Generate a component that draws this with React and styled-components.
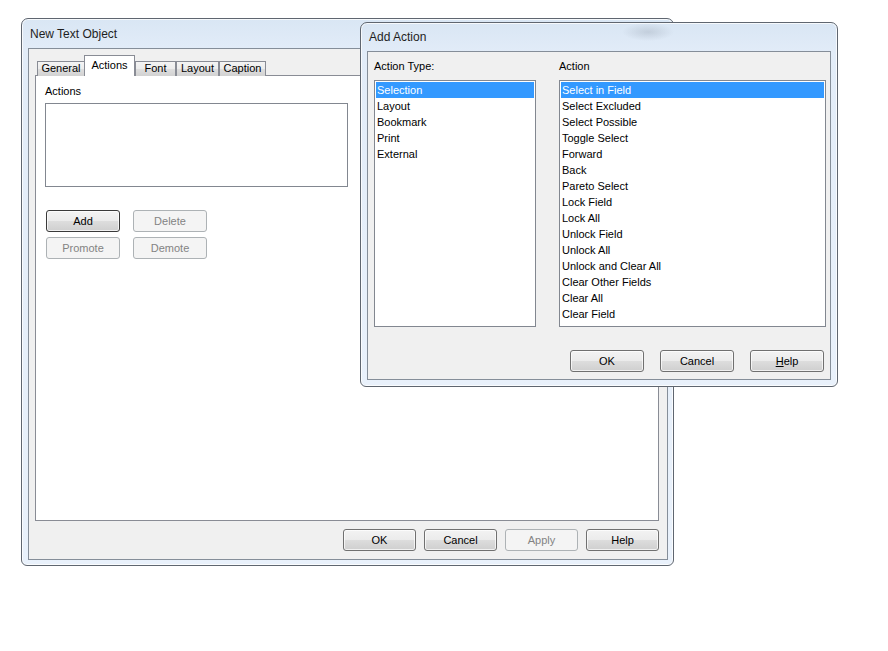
import React from "react";
import styled, { createGlobalStyle, css } from "styled-components";

const Global = createGlobalStyle`
  html, body { margin: 0; padding: 0; background: #ffffff; }
  body { font-family: "Liberation Sans", Arial, sans-serif; font-size: 11px; color: #000; }
  * { box-sizing: border-box; }
`;

const Desktop = styled.div`
  position: relative;
  width: 888px;
  height: 651px;
  overflow: hidden;
  background: #ffffff;
`;

const Frame = styled.div`
  position: absolute;
  left: ${(p) => p.$x}px;
  top: ${(p) => p.$y}px;
  width: ${(p) => p.$w}px;
  height: ${(p) => p.$h}px;
  display: flex;
  flex-direction: column;
  padding: 0 ${(p) => p.$pad}px ${(p) => p.$pad}px 6px;
  border: 1px solid #5f6670;
  border-radius: 7px 7px 6px 6px;
  background: linear-gradient(180deg, #d9e6f4 0px, #e2ecf8 30px, #e9f1fb 100%);
  box-shadow: inset 0 0 0 1px rgba(255, 255, 255, 0.75);
`;

const TitleBar = styled.div`
  height: ${(p) => p.$h}px;
  flex: none;
  display: flex;
  align-items: flex-start;
  padding-left: 2px;
  background: ${(p) =>
    p.$blob
      ? "radial-gradient(ellipse 26px 9px at 281px 9px, rgba(130,140,155,0.28), rgba(130,140,155,0) 100%)"
      : "none"};
`;

const TitleText = styled.span`
  font-family: "Liberation Sans", Arial, sans-serif;
  font-size: 12px;
  line-height: 16px;
  margin-top: ${(p) => p.$top}px;
  color: #1e1e1e;
  flex: 1;
`;

const Client = styled.div`
  flex: 1;
  display: flex;
  flex-direction: column;
  border: 1px solid #858e99;
  background: #f0f0f0;
  padding: ${(p) => p.$pad};
`;

/* ---------- tabs ---------- */
const TabStrip = styled.div`
  display: flex;
  align-items: flex-end;
  height: 20px;
  padding-left: 2px;
  position: relative;
  z-index: 1;
`;

const Tab = styled.div`
  width: ${(p) => p.$w}px;
  margin-left: ${(p) => p.$ml || 0}px;
  margin-bottom: -1px;
  border: 1px solid #898c95;
  border-bottom: none;
  font-size: 11px;
  text-align: center;
  ${(p) =>
    p.$active
      ? css`
          height: 21px;
          background: #ffffff;
          line-height: 16px;
          padding-top: 1px;
        `
      : css`
          height: 15px;
          background: linear-gradient(180deg, #f4f4f4 0%, #ececec 50%, #dedede 51%, #d2d2d2 100%);
          line-height: 13px;
        `}
`;

const TabPanel = styled.div`
  flex: 1;
  border: 1px solid #898c95;
  background: #ffffff;
  padding: 8px 9px;
  display: flex;
  flex-direction: column;
  align-items: flex-start;
`;

const Label = styled.div`
  font-size: 11px;
  line-height: 14px;
  height: 14px;
`;

const ListBox = styled.div`
  width: ${(p) => p.$w}px;
  height: ${(p) => p.$h}px;
  margin-top: ${(p) => p.$mt || 0}px;
  border: 1px solid #828790;
  background: #ffffff;
  padding: 1px;
  display: flex;
  flex-direction: column;
`;

const ListItem = styled.div`
  height: 16px;
  line-height: 16px;
  padding-left: 1px;
  font-size: 11px;
  white-space: nowrap;
  background: ${(p) => (p.$sel ? "#3399ff" : "transparent")};
  color: ${(p) => (p.$sel ? "#ffffff" : "#000000")};
`;

const ButtonGrid = styled.div`
  display: grid;
  grid-template-columns: 74px 74px;
  column-gap: 13px;
  row-gap: 5px;
  margin-top: 23px;
  margin-left: 1px;
`;

const Btn = styled.div`
  width: ${(p) => p.$w || 74}px;
  height: 22px;
  display: flex;
  align-items: center;
  justify-content: center;
  font-size: 11px;
  border-radius: 3px;
  ${(p) =>
    p.$disabled
      ? css`
          border: 1px solid #adb2b5;
          background: #f4f4f4;
          color: #838383;
        `
      : css`
          border: 1px solid ${p.$default ? "#3a3a3a" : "#707070"};
          background: linear-gradient(180deg, #f3f3f3 0%, #ebebeb 50%, #dddddd 51%, #cfcfcf 100%);
          box-shadow: inset 0 0 0 1px rgba(255, 255, 255, 0.7);
          color: #000;
        `}
`;

const Footer = styled.div`
  display: flex;
  justify-content: flex-end;
  gap: ${(p) => p.$gap}px;
  margin-top: ${(p) => p.$mt}px;
  margin-right: ${(p) => p.$mr || 0}px;
`;

const Columns = styled.div`
  display: flex;
  gap: 23px;
`;

const Column = styled.div`
  display: flex;
  flex-direction: column;
`;

const U = styled.span`
  text-decoration: underline;
`;

const tabs = [
  { label: "General", w: 48 },
  { label: "Actions", w: 51, active: true, ml: -1 },
  { label: "Font", w: 41 },
  { label: "Layout", w: 43 },
  { label: "Caption", w: 47 },
];

const actionTypes = ["Selection", "Layout", "Bookmark", "Print", "External"];
const actions = [
  "Select in Field",
  "Select Excluded",
  "Select Possible",
  "Toggle Select",
  "Forward",
  "Back",
  "Pareto Select",
  "Lock Field",
  "Lock All",
  "Unlock Field",
  "Unlock All",
  "Unlock and Clear All",
  "Clear Other Fields",
  "Clear All",
  "Clear Field",
];

export default function App() {
  return (
    <>
      <Global />
      <Desktop>
        <Frame $x={21} $y={18} $w={653} $h={548} $pad={5}>
          <TitleBar $h={29}>
            <TitleText $top={7}>New Text Object</TitleText>
          </TitleBar>
          <Client $pad="6px 8px 8px 6px">
            <TabStrip>
              {tabs.map((t) => (
                <Tab key={t.label} $w={t.w} $ml={t.ml} $active={t.active}>
                  {t.label}
                </Tab>
              ))}
            </TabStrip>
            <TabPanel>
              <Label>Actions</Label>
              <ListBox $w={303} $h={84} $mt={5} />
              <ButtonGrid>
                <Btn $default>Add</Btn>
                <Btn $disabled>Delete</Btn>
                <Btn $disabled>Promote</Btn>
                <Btn $disabled>Demote</Btn>
              </ButtonGrid>
            </TabPanel>
            <Footer $gap={8} $mt={8}>
              <Btn $w={73}>OK</Btn>
              <Btn $w={73}>Cancel</Btn>
              <Btn $w={73} $disabled>Apply</Btn>
              <Btn $w={73}>Help</Btn>
            </Footer>
          </Client>
        </Frame>

        <Frame $x={360} $y={22} $w={478} $h={365} $pad={6}>
          <TitleBar $h={28} $blob>
            <TitleText $top={6}>Add Action</TitleText>
          </TitleBar>
          <Client $pad="7px 4px 7px 6px">
            <Columns>
              <Column>
                <Label>Action Type:</Label>
                <ListBox $w={162} $h={247} $mt={7}>
                  {actionTypes.map((a, i) => (
                    <ListItem key={a} $sel={i === 0}>
                      {a}
                    </ListItem>
                  ))}
                </ListBox>
              </Column>
              <Column>
                <Label>Action</Label>
                <ListBox $w={267} $h={247} $mt={7}>
                  {actions.map((a, i) => (
                    <ListItem key={a} $sel={i === 0}>
                      {a}
                    </ListItem>
                  ))}
                </ListBox>
              </Column>
            </Columns>
            <Footer $gap={16} $mt={23} $mr={2}>
              <Btn>OK</Btn>
              <Btn>Cancel</Btn>
              <Btn>
                <U>H</U>elp
              </Btn>
            </Footer>
          </Client>
        </Frame>
      </Desktop>
    </>
  );
}
